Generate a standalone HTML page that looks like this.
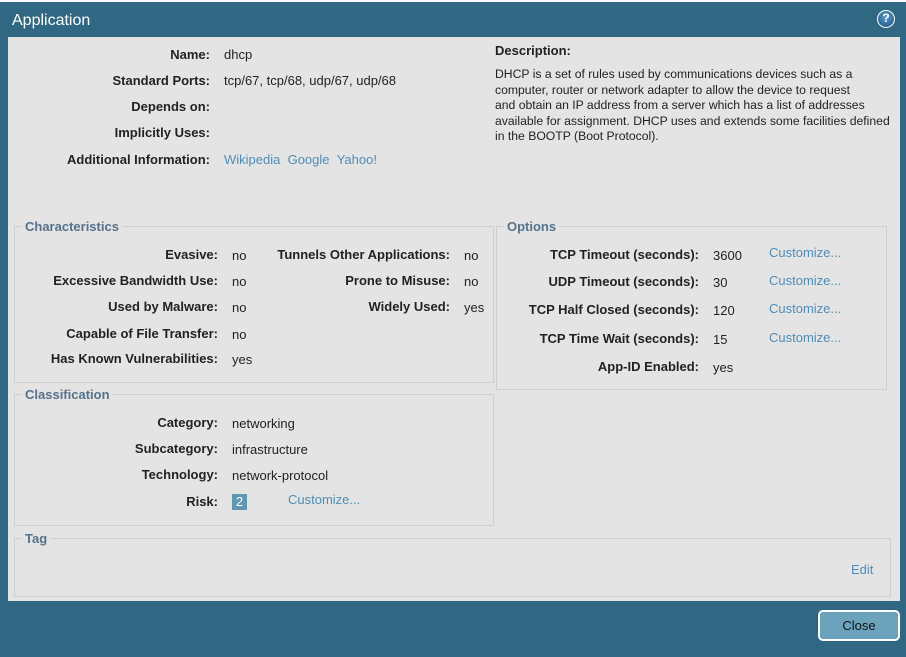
<!DOCTYPE html>
<html><head><meta charset="utf-8"><style>
*{margin:0;padding:0;box-sizing:border-box}
body{width:906px;height:657px;background:#fff;position:relative;overflow:hidden;font-family:"Liberation Sans",sans-serif;font-size:13px;color:#222}
#dlg{position:absolute;left:0;top:2px;width:906px;height:655px;background:#306783}
#title{position:absolute;left:12px;top:12px;color:#fff;font-size:16px}
#help{position:absolute;left:877px;top:10px;width:18px;height:18px;border-radius:50%;background:radial-gradient(circle at 50% 35%,#5a9cd0,#1c4f7e);border:1.5px solid #fff;color:#fff;font-size:12px;font-weight:bold;text-align:center;line-height:15px}
#panel{position:absolute;left:8px;top:37px;width:892px;height:564px;background:#e4e4e4}
.t{position:absolute;line-height:16px;white-space:nowrap}
.l{font-weight:bold;text-align:right}
.a{color:#4f8db8}
.fs{position:absolute;border:1px solid #cfcfcf}
.lg{position:absolute;background:#e4e4e4;color:#56728a;font-weight:bold;padding:0 3px;line-height:16px;top:-8px;left:7px}
#desc{position:absolute;left:495px;top:67px;width:395px;line-height:15.5px;font-size:12.2px;white-space:nowrap}
#badge{position:absolute;left:232px;top:494px;width:15px;height:16px;background:#5f97b0;color:#fff;text-align:center;line-height:16px}
#close{position:absolute;left:818px;top:610px;width:82px;height:31px;background:#6ba3bd;border:2px solid #fff;border-radius:5px;text-align:center;line-height:27px;color:#111;font-size:13px}
</style></head><body>
<div id="dlg"></div>
<div id="title">Application</div>
<div id="help">?</div>
<div id="panel"></div>

<div class="t l" style="right:696px;top:47px">Name:</div><div class="t" style="left:224px;top:47px">dhcp</div>
<div class="t l" style="right:696px;top:73px">Standard Ports:</div><div class="t" style="left:224px;top:73px">tcp/67, tcp/68, udp/67, udp/68</div>
<div class="t l" style="right:696px;top:99px">Depends on:</div>
<div class="t l" style="right:696px;top:125px">Implicitly Uses:</div>
<div class="t l" style="right:696px;top:152px">Additional Information:</div>
<div class="t a" style="left:224px;top:152px">Wikipedia&nbsp;&nbsp;Google&nbsp;&nbsp;Yahoo!</div>

<div class="t" style="left:495px;top:43px;font-weight:bold">Description:</div>
<div id="desc">DHCP is a set of rules used by communications devices such as a<br>computer, router or network adapter to allow the device to request<br>and obtain an IP address from a server which has a list of addresses<br>available for assignment. DHCP uses and extends some facilities defined<br>in the BOOTP (Boot Protocol).</div>

<div class="fs" style="left:14px;top:226px;width:480px;height:157px"><div class="lg">Characteristics</div></div>
<div class="fs" style="left:496px;top:226px;width:391px;height:164px"><div class="lg">Options</div></div>
<div class="fs" style="left:14px;top:394px;width:480px;height:132px"><div class="lg">Classification</div></div>
<div class="fs" style="left:14px;top:538px;width:877px;height:59px"><div class="lg">Tag</div></div>

<div class="t l" style="right:688px;top:247px">Evasive:</div><div class="t" style="left:232px;top:248px">no</div>
<div class="t l" style="right:688px;top:273px">Excessive Bandwidth Use:</div><div class="t" style="left:232px;top:274px">no</div>
<div class="t l" style="right:688px;top:299px">Used by Malware:</div><div class="t" style="left:232px;top:300px">no</div>
<div class="t l" style="right:688px;top:326px">Capable of File Transfer:</div><div class="t" style="left:232px;top:327px">no</div>
<div class="t l" style="right:688px;top:351px">Has Known Vulnerabilities:</div><div class="t" style="left:232px;top:352px">yes</div>
<div class="t l" style="right:456px;top:247px">Tunnels Other Applications:</div><div class="t" style="left:464px;top:248px">no</div>
<div class="t l" style="right:456px;top:273px">Prone to Misuse:</div><div class="t" style="left:464px;top:274px">no</div>
<div class="t l" style="right:456px;top:299px">Widely Used:</div><div class="t" style="left:464px;top:300px">yes</div>

<div class="t l" style="right:207px;top:247px">TCP Timeout (seconds):</div><div class="t" style="left:713px;top:248px">3600</div><div class="t a" style="left:769px;top:245px">Customize...</div>
<div class="t l" style="right:207px;top:274px">UDP Timeout (seconds):</div><div class="t" style="left:713px;top:275px">30</div><div class="t a" style="left:769px;top:273px">Customize...</div>
<div class="t l" style="right:207px;top:302px">TCP Half Closed (seconds):</div><div class="t" style="left:713px;top:303px">120</div><div class="t a" style="left:769px;top:301px">Customize...</div>
<div class="t l" style="right:207px;top:331px">TCP Time Wait (seconds):</div><div class="t" style="left:713px;top:332px">15</div><div class="t a" style="left:769px;top:330px">Customize...</div>
<div class="t l" style="right:207px;top:359px">App-ID Enabled:</div><div class="t" style="left:713px;top:360px">yes</div>

<div class="t l" style="right:688px;top:415px">Category:</div><div class="t" style="left:232px;top:416px">networking</div>
<div class="t l" style="right:688px;top:441px">Subcategory:</div><div class="t" style="left:232px;top:442px">infrastructure</div>
<div class="t l" style="right:688px;top:467px">Technology:</div><div class="t" style="left:232px;top:468px">network-protocol</div>
<div class="t l" style="right:688px;top:494px">Risk:</div><div id="badge">2</div><div class="t a" style="left:288px;top:492px">Customize...</div>

<div class="t a" style="left:851px;top:562px">Edit</div>
<div id="close">Close</div>
</body></html>
